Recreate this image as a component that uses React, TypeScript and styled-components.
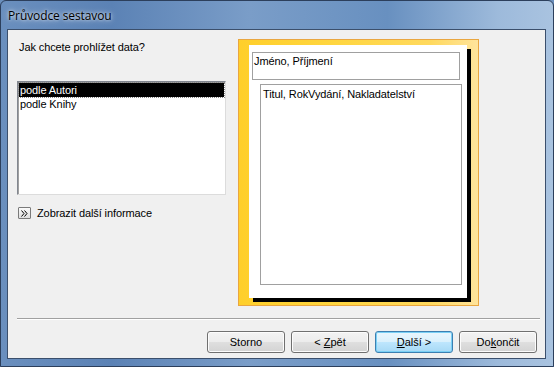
import React from "react";
import styled, { createGlobalStyle } from "styled-components";

const Global = createGlobalStyle`
  html, body { margin: 0; padding: 0; background: #6a8fbd; }
  body { font-family: "Liberation Sans", Arial, sans-serif; font-size: 11px; color: #000; letter-spacing: -0.1px; }
`;

const Window = styled.div`
  width: 554px;
  height: 367px;
  box-sizing: border-box;
  display: flex;
  flex-direction: column;
  border-radius: 6px 6px 0 0;
  background: linear-gradient(90deg, #6a8fbe 0%, #5b82b5 20%, #7a9dc8 45%, #6890c0 70%, #9dbadb 90%, #a9c3e0 100%);
  border: 1px solid #2c3f5c;
  overflow: hidden;
`;

const TitleBar = styled.div`
  height: 28px;
  display: flex;
  align-items: center;
  padding-left: 7px;
  font-family: "Open Sans", "Noto Sans", sans-serif;
  font-size: 12px;
  color: #000;
  text-shadow: 0 0 6px rgba(255,255,255,0.8), 0 0 3px rgba(255,255,255,0.7);
  letter-spacing: -0.1px;
`;

const Client = styled.div`
  flex: 1;
  margin: 0 7px 7px 6px;
  border: 1px solid #3b4f6c;
  background: #f0f0f0;
  display: flex;
  flex-direction: column;
`;

const Body = styled.div`
  display: flex;
  height: 288px;
  padding: 9px 0 0 9px;
  box-sizing: border-box;
`;

const LeftCol = styled.div`
  width: 221px;
  display: flex;
  flex-direction: column;
`;

const Prompt = styled.div`
  margin: 2px 0 0 2px;
  height: 14px;
`;

const ListBox = styled.div`
  margin-top: 26px;
  width: 209px;
  height: 114px;
  box-sizing: border-box;
  background: #fff;
  border: 1px solid #828790;
  border-right-color: #dcdcdc;
  border-bottom-color: #dcdcdc;
  box-shadow: inset 1px 1px 0 #a0a0a0;
  padding: 1px 1px;
`;

const ListItem = styled.div<{ $selected?: boolean }>`
  height: 14px;
  line-height: 14px;
  padding-left: 1px;
  background: ${(p) => (p.$selected ? "#000" : "transparent")};
  color: ${(p) => (p.$selected ? "#fff" : "#000")};
  outline: ${(p) => (p.$selected ? "1px dotted #888" : "none")};
`;

const MoreRow = styled.div`
  margin-top: 12px;
  display: flex;
  align-items: center;
  gap: 6px;
  padding-left: 1px;
`;

const MoreIcon = styled.div`
  width: 11px;
  height: 10px;
  border: 1px solid #7a7a7a;
  border-radius: 1px;
  background: linear-gradient(#fafafa, #dedede);
  display: flex;
  align-items: center;
  justify-content: center;
`;

const PreviewFrame = styled.div`
  width: 241px;
  height: 267px;
  box-sizing: border-box;
  border: 1px solid #e9a640;
  background: linear-gradient(90deg, #ffcf2a 0%, #ffd640 40%, #ffd95e 80%, #ffe49c 100%);
  padding: 5px 7px 3px 10px;
  display: flex;
`;

const Page = styled.div`
  flex: 1;
  background: #fff;
  box-shadow: 4px 4px 0 #000;
  margin-right: 4px;
  margin-bottom: 4px;
  display: flex;
  flex-direction: column;
  padding: 7px 7px 13px 3px;
  gap: 4px;
`;

const HeaderBox = styled.div`
  height: 28px;
  box-sizing: border-box;
  border: 1px solid #a0a0a0;
  padding: 2px 1px;
`;

const DetailBox = styled.div`
  flex: 1;
  margin-left: 8px;
  margin-right: -2px;
  border: 1px solid #a0a0a0;
  padding: 3px 2px;
`;

const Separator = styled.div`
  margin: 0 5px 0 9px;
  height: 1px;
  background: #a0a0a0;
  border-bottom: 1px solid #fff;
`;

const ButtonRow = styled.div`
  display: flex;
  justify-content: flex-end;
  gap: 6px;
  padding: 11px 8px 0 0;
`;

const Button = styled.button<{ $default?: boolean }>`
  width: 78px;
  height: 22px;
  box-sizing: border-box;
  font-family: "Liberation Sans", Arial, sans-serif;
  font-size: 11px;
  color: #000;
  border-radius: 3px;
  border: 1px solid ${(p) => (p.$default ? "#3c7fb1" : "#707070")};
  background: ${(p) =>
    p.$default
      ? "linear-gradient(#eaf6fd 0%, #d9f0fc 50%, #bee6fd 50%, #a7d9f5 100%)"
      : "linear-gradient(#f3f3f3 0%, #ececec 50%, #dfdfdf 50%, #d3d3d3 100%)"};
  box-shadow: inset 0 0 0 1px ${(p) => (p.$default ? "#7ad0f5" : "#fcfcfc")};
  padding: 0;
  & u { text-decoration: underline; }
`;

export default function App() {
  return (
    <>
      <Global />
      <Window>
        <TitleBar>Průvodce sestavou</TitleBar>
        <Client>
          <Body>
            <LeftCol>
              <Prompt>Jak chcete prohlížet data?</Prompt>
              <ListBox>
                <ListItem $selected>podle Autori</ListItem>
                <ListItem>podle Knihy</ListItem>
              </ListBox>
              <MoreRow>
                <MoreIcon>
                  <svg width="9" height="9" viewBox="0 0 9 9">
                    <path d="M1.5 1.5 L4 4.5 L1.5 7.5 M4.5 1.5 L7 4.5 L4.5 7.5" stroke="#000" strokeWidth="1" fill="none" />
                  </svg>
                </MoreIcon>
                <span>Zobrazit další informace</span>
              </MoreRow>
            </LeftCol>
            <PreviewFrame>
              <Page>
                <HeaderBox>Jméno, Příjmení</HeaderBox>
                <DetailBox>Titul, RokVydání, Nakladatelství</DetailBox>
              </Page>
            </PreviewFrame>
          </Body>
          <Separator />
          <ButtonRow>
            <Button>Storno</Button>
            <Button>&lt; <u>Z</u>pět</Button>
            <Button $default><u>D</u>alší &gt;</Button>
            <Button>Do<u>k</u>ončit</Button>
          </ButtonRow>
        </Client>
      </Window>
    </>
  );
}
